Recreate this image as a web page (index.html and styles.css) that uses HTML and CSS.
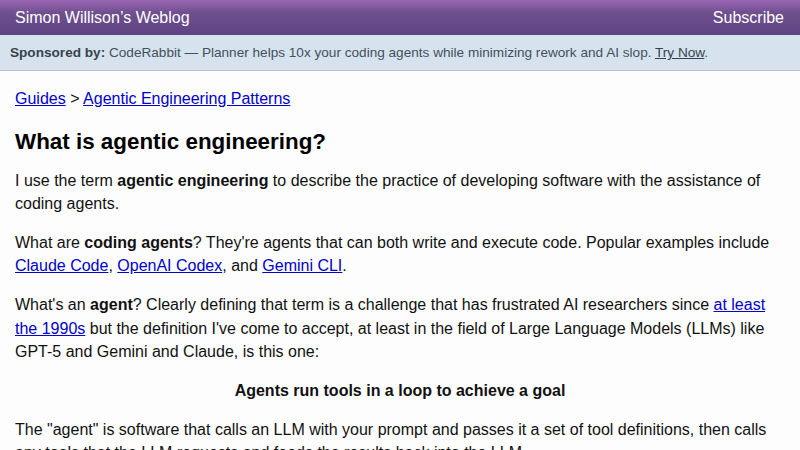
FILE: index.html
```html
<!DOCTYPE html>
<html>
<head>
<meta charset="utf-8">
<link rel="stylesheet" href="styles.css">
</head>
<body>
<header class="top">
  <a class="brand" href="#">Simon Willison’s Weblog</a>
  <a class="sub" href="#">Subscribe</a>
</header>
<div class="sponsor"><strong>Sponsored by:</strong> CodeRabbit — Planner helps 10x your coding agents while minimizing rework and AI slop. <a href="#">Try Now</a>.</div>
<main class="content">
  <p class="crumbs"><a href="#">Guides</a> &gt; <a href="#">Agentic Engineering Patterns</a></p>
  <h1>What is agentic engineering?</h1>
  <p>I use the term <strong>agentic engineering</strong> to describe the practice of developing software with the assistance of coding agents.</p>
  <p>What are <strong>coding agents</strong>? They're agents that can both write and execute code. Popular examples include <a href="#">Claude Code</a>, <a href="#">OpenAI Codex</a>, and <a href="#">Gemini CLI</a>.</p>
  <p>What's an <strong>agent</strong>? Clearly defining that term is a challenge that has frustrated AI researchers since <a href="#">at least the 1990s</a> but the definition I've come to accept, at least in the field of Large Language Models (LLMs) like GPT-5 and Gemini and Claude, is this one:</p>
  <p class="center"><strong>Agents run tools in a loop to achieve a goal</strong></p>
  <p>The "agent" is software that calls an LLM with your prompt and passes it a set of tool definitions, then calls any tools that the LLM requests and feeds the results back into the LLM.</p>
</main>
</body>
</html>
```
FILE: styles.css
```css
html, body { margin: 0; padding: 0; }
body {
  font-family: "Liberation Sans", Arial, sans-serif;
  background: #fdfdfd;
  color: #111;
}
.top {
  height: 35px;
  box-sizing: border-box;
  display: flex;
  justify-content: space-between;
  align-items: center;
  padding: 0 16px 0 15px;
  background: linear-gradient(to bottom, #9a67b4 0%, #70508f 35%, #5e4383 100%);
}
.top a { color: #fff; text-decoration: none; font-size: 16px; }
.sponsor {
  background: #d6e3ef;
  border-bottom: 1px solid #b5c4d2;
  color: #45505a;
  font-size: 13.6px;
  height: 36px;
  box-sizing: border-box;
  padding: 10px 10px;
  line-height: 16px;
}
.sponsor strong { color: #38424d; }
.sponsor a { color: #38424d; }
.content {
  padding: 16px 15px 0 15px;
  font-size: 16px;
  line-height: 1.45;
}
.content p { margin: 0 0 16px 0; }
.content a { color: #0000cc; }
.crumbs { margin-bottom: 0 !important; }
h1 {
  font-size: 22.4px;
  line-height: 28px;
  margin: 18px 0 12.4px 0;
  color: #000;
}
.center { text-align: center; }
```
